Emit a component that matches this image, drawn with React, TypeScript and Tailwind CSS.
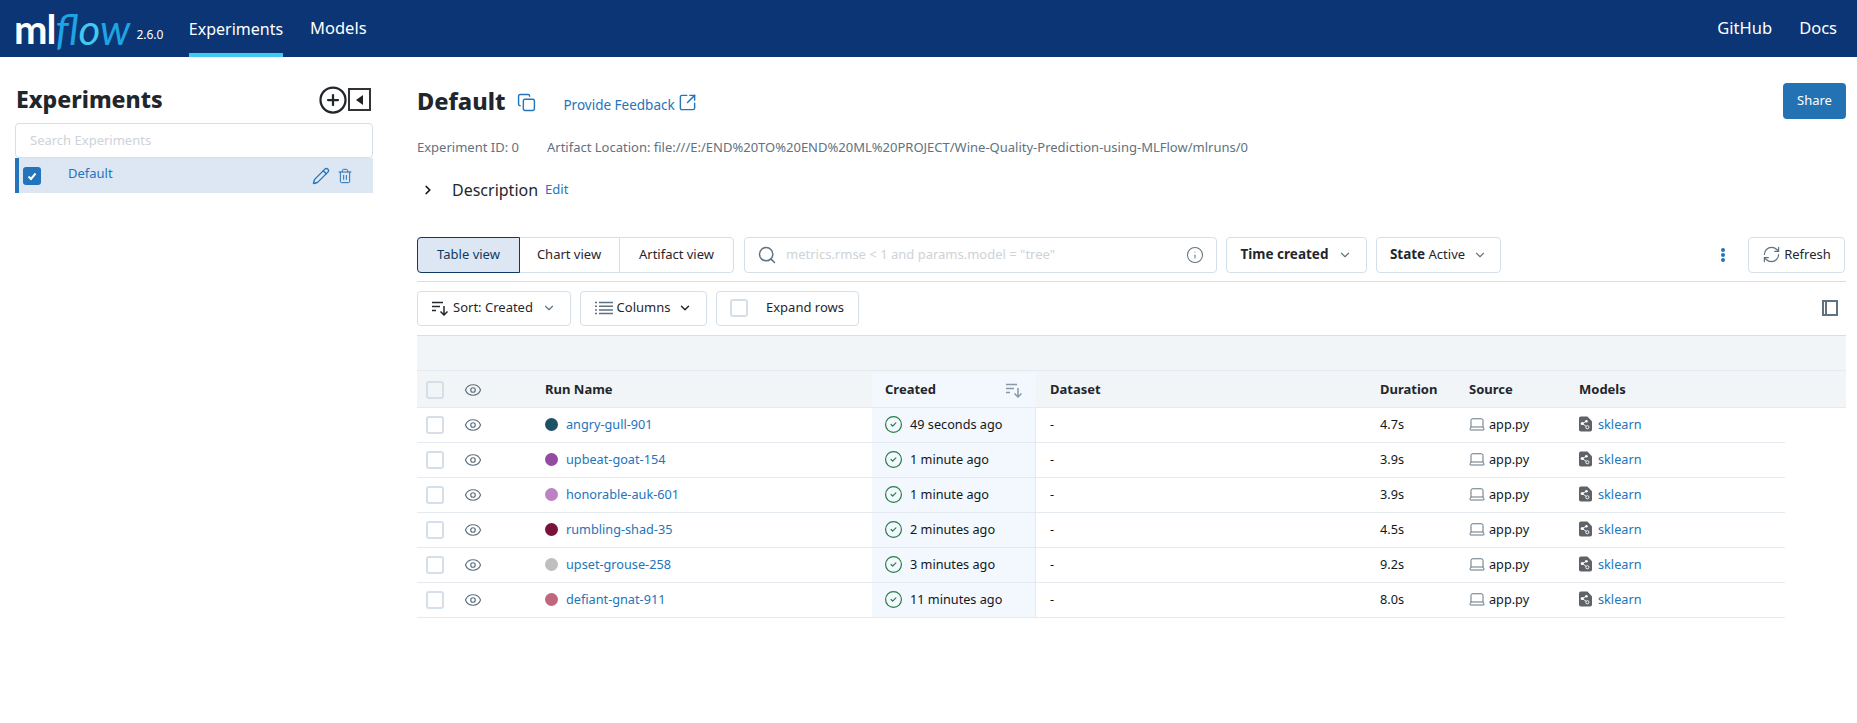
import {
  ChevronDown,
  ChevronRight,
  CircleCheck,
  CirclePlus,
  Copy,
  Eye,
  Info,
  Laptop,
  Pencil,
  RefreshCw,
  Search,
  SquareArrowOutUpRight,
  Trash2,
} from 'lucide-react'

const runs = [
  { name: 'angry-gull-901', color: 'bg-[#1b5265]', created: '49 seconds ago', duration: '4.7s' },
  { name: 'upbeat-goat-154', color: 'bg-[#934ca0]', created: '1 minute ago', duration: '3.9s' },
  { name: 'honorable-auk-601', color: 'bg-[#bd82c4]', created: '1 minute ago', duration: '3.9s' },
  { name: 'rumbling-shad-35', color: 'bg-[#7b1239]', created: '2 minutes ago', duration: '4.5s' },
  { name: 'upset-grouse-258', color: 'bg-[#bfbfbf]', created: '3 minutes ago', duration: '9.2s' },
  { name: 'defiant-gnat-911', color: 'bg-[#c0667e]', created: '11 minutes ago', duration: '8.0s' },
]

const columns = 'grid grid-cols-[48px_80px_327px_164px_344px_89px_110px_206px] items-center'

// sort lines with a down arrow, used by the Sort button and the Created header
function SortIcon({ className }: { className: string }) {
  return (
    <svg viewBox="0 0 16 16" fill="none" stroke="currentColor" strokeWidth="1.5" className={className}>
      <path d="M0 2.5h11M0 6.5h8M0 10.5h4M12 6v9M8.5 11.5l3.5 3.5 3.5-3.5" />
    </svg>
  )
}

function ColumnsIcon() {
  return (
    <svg viewBox="0 0 18 14" fill="none" stroke="currentColor" strokeWidth="1.5" className="h-[14px] w-[18px] text-[#5f7281]">
      <path d="M0 1.5h2M0 5.2h2M0 8.9h2M0 12.5h2M4 1.5h14M4 5.2h14M4 8.9h14M4 12.5h14" />
    </svg>
  )
}

// sklearn model file badge
function ModelIcon() {
  return (
    <svg viewBox="0 0 14 16" className="h-4 w-[13px] shrink-0">
      <path d="M2 0h7l5 5v9a2 2 0 0 1-2 2H2a2 2 0 0 1-2-2V2a2 2 0 0 1 2-2z" fill="#5f6368" />
      <path d="M3.5 7.5l4.5-2.5M3.5 7.5l5 3.5" stroke="#fff" strokeWidth="1" fill="none" />
      <circle cx="3.5" cy="7.5" r="1.7" fill="#fff" />
      <circle cx="8" cy="5" r="1.4" fill="#fff" />
      <circle cx="9" cy="11.5" r="1.7" fill="#5f6368" stroke="#fff" />
    </svg>
  )
}

function Box({ className = '' }: { className?: string }) {
  return <span className={`block h-[18px] w-[18px] rounded-[3px] border-2 border-[#d5dfe9] ${className}`} />
}

function Header() {
  return (
    <header className="flex h-[57px] items-stretch justify-between bg-[#0b3574] text-white">
      <div className="flex items-stretch">
        <div className="flex w-[189px] items-center pl-[14px]">
          <span className="font-['Lato'] text-[40px] leading-none font-bold tracking-[-1px]">ml</span>
          <span className="font-['Lato'] text-[42px] leading-none text-[#1ea4e3] italic">
            fl<span className="text-[#43c9ed]">o</span>w
          </span>
          <span className="mt-[12px] ml-[6px] text-[12px]">2.6.0</span>
        </div>
        <div className="flex h-full w-[94px] items-center justify-center border-b-4 border-[#43c9ed] pt-1 text-[16px] whitespace-nowrap">
          Experiments
        </div>
        <div className="ml-[27px] flex items-center text-[16.5px] text-white">Models</div>
      </div>
      <div className="flex items-center gap-[27px] pr-[20px] text-[16.5px]">
        <span>GitHub</span>
        <span>Docs</span>
      </div>
    </header>
  )
}

function Sidebar() {
  return (
    <aside className="ml-[15px] w-[358px] shrink-0 pt-[23px]">
      <div className="flex h-[39px] items-center justify-between pr-[2px]">
        <h1 className="pl-px text-[23px] font-extrabold text-[#1f272d]">Experiments</h1>
        <div className="flex items-center gap-0 text-[#1f272d]">
          <CirclePlus className="h-[30px] w-[30px]" strokeWidth={1.8} />
          <span className="flex h-[23px] w-[23px] items-center justify-center border-2 border-[#333]">
            <span className="h-0 w-0 border-y-[5px] border-r-[7px] border-y-transparent border-r-[#222]" />
          </span>
        </div>
      </div>
      <div className="mt-[4px] flex h-[35px] items-center rounded border border-[#d5dfe9] pl-[14px] text-[13px] text-[#cdd3d8]">
        Search Experiments
      </div>
      <div className="flex h-[35px] items-center border-l-4 border-[#2374bb] bg-[#dce7f3] pr-[20px] pl-[4px] text-[13px] text-[#2374bb]">
        <span className="flex h-[18px] w-[18px] items-center justify-center rounded-[3px] bg-[#2374bb]">
          <svg viewBox="0 0 12 12" className="h-3 w-3" fill="none" stroke="#fff" strokeWidth="2">
            <path d="M2.5 6.5l2.5 2.5 4.5-5.5" />
          </svg>
        </span>
        <span className="ml-[27px] flex-1 pb-[3px]">Default</span>
        <Pencil className="h-[18px] w-[18px]" strokeWidth={1.8} />
        <Trash2 className="ml-[7px] h-4 w-4" strokeWidth={1.5} />
      </div>
    </aside>
  )
}

function RunsTable() {
  return (
    <div className="mt-[9px] text-[12.7px] text-[#11171c]">
      <div className="h-[36px] border-y border-[#d5dfe9] border-b-[#e4eaf0] bg-[#f2f5f7]" />
      <div className={`${columns} h-[37px] border-b border-[#e4eaf0] bg-[#f2f5f7] pt-[2px] text-[13px] font-bold text-[#1f272d]`}>
        <span className="pl-[9px]">
          <Box />
        </span>
        <Eye className="-ml-px h-[18px] w-[18px] text-[#5f7281]" strokeWidth={1.6} />
        <span>Run Name</span>
        <span className="flex h-full items-center justify-between bg-[#f2f8fd] pr-[14px] pl-[13px]">
          Created
          <SortIcon className="h-4 w-4 font-normal text-[#8a98a3]" />
        </span>
        <span className="pl-[14px]">Dataset</span>
        <span>Duration</span>
        <span>Source</span>
        <span>Models</span>
      </div>
      {runs.map((run) => (
        <div key={run.name} className={`${columns} h-[35px] w-[1368px] border-b border-[#e4eaf0]`}>
          <span className="pl-[9px]">
            <Box />
          </span>
          <Eye className="-ml-px h-[18px] w-[18px] text-[#5f7281]" strokeWidth={1.6} />
          <span className="flex items-center gap-[8px] text-[#2374bb]">
            <span className={`h-[13px] w-[13px] rounded-full ${run.color}`} />
            {run.name}
          </span>
          <span className="flex h-full items-center gap-[7px] border-r border-[#e4eaf0] bg-[#f2f8fd] pl-[12px]">
            <CircleCheck className="h-[19px] w-[19px] text-[#277c43]" strokeWidth={1.5} />
            {run.created}
          </span>
          <span className="pl-[14px]">-</span>
          <span>{run.duration}</span>
          <span className="-ml-px flex items-center gap-[3px]">
            <Laptop className="h-[18px] w-[18px] text-[#5f7281]" strokeWidth={1.3} />
            app.py
          </span>
          <span className="flex items-center gap-[6px] text-[#2374bb]">
            <ModelIcon />
            sklearn
          </span>
        </div>
      ))}
    </div>
  )
}

function Main() {
  return (
    <main className="ml-[44px] w-[1429px] pt-[26px]">
      <div className="flex h-[36px] items-center justify-between">
        <div className="flex items-center">
          <h2 className="pt-px text-[23.5px] font-extrabold text-[#1f272d]">Default</h2>
          <Copy className="mt-[3px] ml-[12px] h-[19px] w-[19px] text-[#2374bb]" strokeWidth={1.8} />
          <span className="mt-[8px] ml-[27px] text-[13.5px] text-[#2374bb]">Provide Feedback</span>
          <SquareArrowOutUpRight className="mt-[3px] ml-[3px] h-[19px] w-[19px] text-[#2374bb]" strokeWidth={1.8} />
        </div>
        <button className="h-[36px] w-[63px] rounded bg-[#2272b4] text-[13px] text-white">Share</button>
      </div>
      <div className="mt-[19px] flex text-[13px] text-[#5f7281]">
        <span>Experiment ID: 0</span>
        <span className="ml-[28px]">
          Artifact Location: file:///E:/END%20TO%20END%20ML%20PROJECT/Wine-Quality-Prediction-using-MLFlow/mlruns/0
        </span>
      </div>
      <div className="mt-[20px] flex h-[24px] items-center">
        <ChevronRight className="ml-[4px] h-[14px] w-[14px] text-[#11171c]" strokeWidth={3} />
        <span className="ml-[17px] text-[16px] text-[#1f272d]">Description</span>
        <span className="ml-[7px] text-[13px] text-[#2374bb]">Edit</span>
      </div>
      <div className="mt-[35px] flex h-[36px] items-stretch text-[13px] text-[#1f272d]">
        <div className="flex w-[317px] rounded border border-[#d5dfe9]">
          <span className="-m-px flex w-[103px] items-center justify-center rounded-l border border-[#0e3a63] bg-[#dce7f3] text-[#0e3a63]">
            Table view
          </span>
          <span className="flex w-[101px] items-center justify-center border-r border-[#d5dfe9]">Chart view</span>
          <span className="flex flex-1 items-center justify-center">Artifact view</span>
        </div>
        <div className="ml-[10px] flex w-[473px] items-center rounded border border-[#d5dfe9] px-[12px] text-[#cdd3d8]">
          <Search className="h-5 w-5 text-[#5f7281]" strokeWidth={1.8} />
          <span className="ml-[9px] flex-1">metrics.rmse &lt; 1 and params.model = "tree"</span>
          <Info className="h-[18px] w-[18px] text-[#5f7281]" strokeWidth={1.4} />
        </div>
        <div className="ml-[9px] flex w-[141px] items-center justify-center gap-[10px] rounded border border-[#d5dfe9] text-[13.5px] font-bold">
          Time created
          <ChevronDown className="h-[14px] w-[14px] font-normal text-[#5f7281]" />
        </div>
        <div className="ml-[9px] flex w-[125px] items-center justify-center gap-[8px] rounded border border-[#d5dfe9]">
          <span>
            <b className="text-[13.5px]">State</b> Active
          </span>
          <ChevronDown className="h-[14px] w-[14px] text-[#5f7281]" />
        </div>
        <div className="ml-[219px] flex w-[6px] flex-col items-center justify-center gap-[1px]">
          <span className="h-[4px] w-[4px] rounded-full bg-[#2374bb]" />
          <span className="h-[4px] w-[4px] rounded-full bg-[#2374bb]" />
          <span className="h-[4px] w-[4px] rounded-full bg-[#2374bb]" />
        </div>
        <div className="ml-[22px] flex w-[97px] items-center justify-center gap-[3px] rounded border border-[#d5dfe9]">
          <RefreshCw className="h-[19px] w-[19px] text-[#5f7281]" strokeWidth={1.5} />
          Refresh
        </div>
      </div>
      <div className="mt-[8px] border-t border-[#d5dfe9]" />
      <div className="mt-[9px] flex h-[35px] items-stretch text-[13px] text-[#1f272d]">
        <div className="flex w-[154px] items-center justify-center gap-[5px] rounded border border-[#d5dfe9]">
          <SortIcon className="h-4 w-4" />
          Sort: Created
          <ChevronDown className="ml-[4px] h-[14px] w-[14px] text-[#5f7281]" />
        </div>
        <div className="ml-[9px] flex w-[127px] items-center justify-center gap-[4px] rounded border border-[#d5dfe9]">
          <ColumnsIcon />
          Columns
          <ChevronDown className="ml-[4px] h-[14px] w-[14px]" strokeWidth={2.5} />
        </div>
        <div className="ml-[9px] flex w-[143px] items-center gap-[18px] rounded border border-[#d5dfe9] pl-[13px]">
          <Box />
          Expand rows
        </div>
        <div className="ml-auto flex items-center pr-[8px]">
          <span className="flex h-[16px] w-[16px] border-2 border-[#5f7281]">
            <span className="h-full w-[3px] border-r-2 border-[#5f7281]" />
          </span>
        </div>
      </div>
      <RunsTable />
    </main>
  )
}

export default function App() {
  return (
    <div className="min-h-[723px] bg-white font-['Noto_Sans',sans-serif]">
      <Header />
      <div className="flex">
        <Sidebar />
        <Main />
      </div>
    </div>
  )
}
